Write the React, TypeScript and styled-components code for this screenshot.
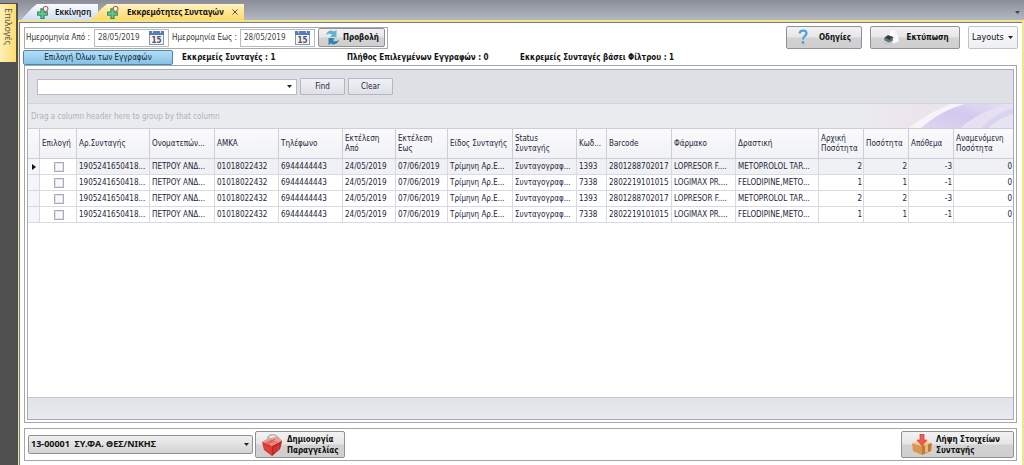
import React from "react";
import styled, { createGlobalStyle } from "styled-components";

const Global = createGlobalStyle`
  * { box-sizing: border-box; }
  body { margin: 0; background: #fff; }
  button, input, select { font: inherit; color: inherit; margin: 0; }
  svg { flex: none; }
`;
const tahoma = `"DejaVu Sans Condensed", "DejaVu Sans", sans-serif`;
const segoe = `"Noto Sans", "Open Sans", sans-serif`;

const Shell = styled.div`
  display: flex;
  min-height: 100vh;
  background: #505050;
  font: 8px/12px ${tahoma};
  color: #111;
`;
const Rail = styled.aside`
  flex: 0 0 18px;
  padding-top: 4px;
  background: linear-gradient(#8a8d96 0, #8a8d96 3px, #505050 3px);
`;
const RailTab = styled.button`
  display: flex;
  align-items: center;
  width: 16px;
  height: 58px;
  padding: 4px 0 0 0;
  border: 0;
  background: linear-gradient(90deg, #fff0b8, #ffdc6e);
  color: #555;
  font: 9px/12px ${segoe};
  writing-mode: vertical-rl;
`;
const Main = styled.main`
  flex: 1;
  min-width: 0;
  display: flex;
  flex-direction: column;
`;
const TabStrip = styled.nav`
  display: flex;
  align-items: flex-end;
  height: 20px;
  padding: 0 4px 0 3px;
  background: linear-gradient(#8a8d97, #b4b8c2);
  font-family: ${segoe};
`;
const Tab = styled.button<{ $active?: boolean; $w: number }>`
  display: flex;
  align-items: center;
  gap: ${(p) => (p.$active ? 8 : 6)}px;
  flex: 0 0 ${(p) => p.$w}px;
  height: 16px;
  padding: 0 6px 0 15px;
  border: 0;
  margin-right: -7px;
  clip-path: polygon(0 100%, 11px 4px, 16px 0, 100% 0, 100% 100%);
  background: ${(p) => (p.$active ? "linear-gradient(#fff3c4, #ffd966)" : "linear-gradient(#fafcff, #cfdcf2)")};
  font-weight: ${(p) => (p.$active ? 700 : 600)};
  white-space: nowrap;
  z-index: ${(p) => (p.$active ? 1 : 0)};
`;
const StripMenu = styled.button`
  display: flex;
  align-items: center;
  align-self: center;
  height: 12px;
  padding: 4px 0 0;
  border: 0;
  background: transparent;
`;
const Spacer = styled.span` flex: 1; `;
const Page = styled.div`
  flex: 1;
  display: flex;
  flex-direction: column;
  padding: 4px;
  border: solid #efe68c;
  border-width: 2px 2px 0 1px;
  box-shadow: inset 1px 1px #77788a;
  background: #fff;
`;
const Toolbar = styled.div`
  display: flex;
  align-items: center;
  gap: 8px;
`;
const DateBar = styled.div`
  display: flex;
  align-items: center;
  gap: 3px;
  height: 22px;
  padding: 0 2px 0 1px;
  margin-left: 1px;
  border: 1px solid #a9a9ae;
  color: #333;
  white-space: nowrap;
`;
const DateLabel = styled.label` width: 65px; `;
const DateField = styled.span`
  display: flex;
  align-items: center;
  height: 18px;
  width: 75px;
  padding: 0 4px 0 3px;
  border: 1px solid #b9bac2;
  background: #fff;
`;
const DateInput = styled.input`
  flex: 1;
  min-width: 0;
  padding: 0;
  border: 0;
  background: transparent;
  color: #444;
`;
const GrayButton = styled.button<{ $w: number; $h: number; $indent?: number }>`
  display: flex;
  align-items: center;
  justify-content: flex-start;
  gap: 4px;
  width: ${(p) => p.$w}px;
  height: ${(p) => p.$h}px;
  padding: 0 4px 0 ${(p) => p.$indent ?? 4}px;
  border: 1px solid #919191;
  border-radius: 2px;
  background: linear-gradient(#f2f2f2, #e6e6e6 48%, #d2d2d2 52%, #cfcfcf);
  color: #111;
  font-weight: 700;
  line-height: 11px;
  text-align: left;
  white-space: nowrap;
`;
const LayoutsButton = styled(GrayButton)`
  justify-content: space-between;
  border-color: #c2c3ca;
  background: linear-gradient(#fbfbfc, #eeeff2);
  font: 500 9px/11px ${tahoma};
`;
const Counts = styled.div`
  display: flex;
  align-items: center;
  height: 15px;
  margin-top: 1px;
  font-weight: 700;
  white-space: nowrap;
`;
const SelectAll = styled.button`
  width: 150px;
  height: 15px;
  padding: 0;
  border: 1px solid #4d87ab;
  border-radius: 2px;
  background: linear-gradient(#b5def5, #85c2e8);
  font-weight: 400;
  line-height: 12px;
  color: #123;
`;
const Count = styled.span<{ $w: number }>`
  width: ${(p) => p.$w}px;
  margin-left: 9px;
`;
const Frame = styled.section`
  display: flex;
  flex-direction: column;
  margin: 0 1px;
  padding: 3px 2px 2px;
  border: 1px solid #a5a6ad;
`;
const GridFrame = styled(Frame)` flex: 1; `;
const Grid = styled.div`
  flex: 1;
  display: flex;
  flex-direction: column;
  border: 1px solid #a9abb8;
  color: #24243c;
`;
const FindPanel = styled.form`
  display: flex;
  align-items: center;
  gap: 3px;
  height: 34px;
  padding-left: 9px;
  border-bottom: 1px solid #d3d4d9;
  background: #dfe0e5;
`;
const Combo = styled.span`
  display: flex;
  align-items: center;
  width: 260px;
  height: 16px;
  padding-right: 4px;
  border: 1px solid #b9bbc8;
  background: #fff;
`;
const ComboInput = styled.input`
  flex: 1;
  min-width: 0;
  border: 0;
  background: transparent;
`;
const FlatButton = styled.button`
  width: 45px;
  height: 17px;
  padding: 0;
  border: 1px solid #b4b6c6;
  border-radius: 1px;
  background: linear-gradient(#f0f1f4, #e0e1e7);
`;
const GroupPanel = styled.div`
  display: flex;
  justify-content: space-between;
  height: 24px;
  padding-left: 3px;
  background: #eaebef;
  color: #b0b1b9;
  line-height: 26px;
`;
const Table = styled.table`
  width: 100%;
  table-layout: fixed;
  border-collapse: separate;
  border-spacing: 0;
  th:last-child, td:last-child { border-right: 0; }
`;
const Th = styled.th`
  height: 31px;
  padding: 0 3px 0 2px;
  border: solid #cdced6;
  border-width: 1px 1px 1px 0;
  background: linear-gradient(#fafafc, #f1f2f5);
  font-weight: 400;
  line-height: 10px;
  text-align: left;
  overflow: hidden;
`;
const Td = styled.td<{ $right?: boolean; $focus?: boolean }>`
  height: 16px;
  padding: 0 1px 0 2px;
  border: solid #d9dae1;
  border-width: 0 1px 1px 0;
  background: ${(p) => (p.$focus ? "#f0f1f4" : "#fff")};
  line-height: 12px;
  text-align: ${(p) => (p.$right ? "right" : "left")};
  white-space: nowrap;
  overflow: hidden;
`;
const MarkTd = styled(Td)`
  background: #f4f5f8;
  svg { display: block; margin-left: 2px; }
`;
const Check = styled.input`
  appearance: none;
  display: block;
  width: 10px;
  height: 10px;
  margin: 0 auto;
  border: 1px solid #a9abb8;
  box-shadow: inset 0 0 0 1px #e2e3ea;
  background: #f8f8fa;
`;
const GridFooter = styled.div`
  height: 22px;
  margin-top: auto;
  border-top: 1px solid #c5c6ce;
  background: linear-gradient(#e2e3e8, #e8e9ed);
`;
const BottomBar = styled(Frame)`
  flex-direction: row;
  align-items: center;
  gap: 2px;
  height: 33px;
  margin-top: 5px;
  padding: 0 2px 0 3px;
`;
const Picker = styled.span`
  position: relative;
  display: flex;
  align-items: center;
  width: 225px;
  height: 19px;
`;
const Select = styled.select`
  appearance: none;
  width: 100%;
  height: 19px;
  padding: 0 16px 2px 2px;
  border: 1px solid #919191;
  border-radius: 2px;
  background: linear-gradient(#efefef, #d2d2d2);
  font: 700 9px/12px ${segoe};
`;
const PickerArrow = styled.span`
  position: absolute;
  right: 4px;
  display: flex;
  pointer-events: none;
`;

const Arrow = ({ color = "#222" }) => (
  <svg width="5" height="3" viewBox="0 0 5 3"><path d="M0 0h5L2.500 3z" fill={color} /></svg>
);
const Cross = () => (
  <svg width="13" height="13" viewBox="0 0 12 12">
    <path d="M4 2h4v3h3v4H8v3H4V9H1V5h3z" fill="#2f8f5a" />
    <path d="M5 3.500h2v2.500h3v2H7v3H5V8H2V6h3z" fill="#62c890" />
    <path d="M6.500 2.500c.5-3 5-2.500 4.500.5-.3 1.500-2 1.500-2.500 3.500" fill="none" stroke="#b5545a" />
    <circle cx="8.700" cy="2.600" r="1.500" fill="#f2f2f2" />
  </svg>
);
const Calendar = () => (
  <svg width="15" height="15" viewBox="0 0 15 15">
    <rect x=".5" y="1.500" width="14" height="13" fill="#f3f4f7" stroke="#8d96a8" />
    <path d="M0 1h15v4H0z" fill="#5580b4" />
    <path d="M3 0h1v3H3zM11 0h1v3h-1z" fill="#dce6f2" />
    <text x="7.500" y="13" textAnchor="middle" fontSize="8" fontWeight="700" fontFamily="DejaVu Sans Condensed" fill="#4b5162">15</text>
  </svg>
);
const Refresh = () => (
  <svg width="13" height="15" viewBox="0 0 13 15">
    <path d="M0 5C1 1 5-.5 8 1.500L10.500 0v7H4l2.200-2.200C4 3.500 2 3.500 0 5z" fill="#5fb3cf" />
    <path d="M13 10c-1 4-5 5.500-8 3.500L2.500 15V8H9l-2.200 2.200c2.200 1.300 4.200 1.300 6.200-.2z" fill="#2f87a9" />
  </svg>
);
const Help = () => (
  <svg width="12" height="17" viewBox="0 0 12 17">
    <ellipse cx="6" cy="15.500" rx="4" ry="1" fill="#c3cdd3" />
    <path d="M2.500 4.500C3 1 9 .5 9.500 4c.3 3-3.500 3-3.500 6.500" fill="none" stroke="#4aa3d8" strokeWidth="2.200" />
    <circle cx="6" cy="13.500" r="1.400" fill="#4aa3d8" />
  </svg>
);
const Printer = () => (
  <svg width="17" height="15" viewBox="0 0 17 15">
    <path d="M8 0l5 1.500L11 8 6 6z" fill="#fdfdfd" />
    <path d="M9 7l5-5 2 9-6 3z" fill="#f7f8f9" />
    <path d="M1 8l4-3L10.500 7 9.500 11l-4 1.500L1.500 10.500z" fill="#69747a" />
    <path d="M2 7.500L5 5.500 9.500 7 6.500 10z" fill="#2c3f3d" />
    <path d="M0 12l5 1.500 5-1-2.500 2H3z" fill="#bfc6ca" />
  </svg>
);
const Basket = () => (
  <svg width="22" height="22" viewBox="0 0 22 22">
    <path d="M1 8l6-3 10-2 4 4-2 8-8 7-8-6z" fill="#d93a35" />
    <path d="M1 8l7-4 9-1 4 4-10 5z" fill="#f09a90" />
    <path d="M11 12v10l8-7 2-8z" fill="#c22a2a" />
    <path d="M4 8.500l6 2M6 7l7 2.500M9 6l7 2.500M6 10l8-5" stroke="#d84a44" strokeWidth=".8" />
    <path d="M4 12l1 3M7 13l1 4M14 13v5M17 11v5" stroke="#e4605a" strokeWidth=".8" />
    <path d="M7 7c-2-7 8-9 11-1" fill="none" stroke="#b4b4b9" strokeWidth="1.600" />
  </svg>
);
const Parcel = () => (
  <svg width="20" height="21" viewBox="0 0 20 21">
    <path d="M0 9l10 3v9l-9-4z" fill="#d9964e" />
    <path d="M0 9l10-4 10 4-10 3z" fill="#f3cf98" />
    <path d="M10 12l10-3-1 8-9 4z" fill="#c07a36" />
    <path d="M13 11l3-1v8l-3 1z" fill="#e8b878" />
    <path d="M8 0h4v6h3l-5 6-5-6h3z" fill="#ee5b55" stroke="#c83232" strokeWidth=".6" />
  </svg>
);
const Swoosh = () => (
  <svg width="150" height="24" viewBox="0 0 150 24">
    <defs>
      <linearGradient id="glow" x1="0" x2="1">
        <stop offset="0" stopColor="#eaebef" />
        <stop offset=".3" stopColor="#ece5ed" />
        <stop offset="1" stopColor="#e6e3f2" />
      </linearGradient>
      <linearGradient id="lilac" x1="0" x2="1" y1="1" y2="0">
        <stop offset="0" stopColor="#dcd6ef" />
        <stop offset=".5" stopColor="#d2c9ee" />
        <stop offset="1" stopColor="#e2def3" />
      </linearGradient>
    </defs>
    <path d="M0 0h150v24H0z" fill="url(#glow)" />
    <path d="M46 24C60 13 74 5 88 0h14C84 5 72 12 58 24z" fill="#f6f4f9" />
    <path d="M58 24C72 12 84 5 102 0h42c-18 5-34 13-46 24z" fill="url(#lilac)" />
    <path d="M98 24c12-11 28-19 46-24h6v4c-14 4-24 11-34 20z" fill="#e5e1f3" />
    <path d="M118 24c8-9 18-16 32-20v6c-12 4-18 8-24 14z" fill="#dad4ee" />
  </svg>
);

type Col = { w: number; t: string; right?: boolean };
const cols: Col[] = [
  { w: 73, t: "Αρ.Συνταγής" }, { w: 65, t: "Ονοματεπών..." }, { w: 64, t: "ΑΜΚΑ" },
  { w: 64, t: "Τηλέφωνο" }, { w: 53, t: "Εκτέλεση Από" }, { w: 52, t: "Εκτέλεση Εως" },
  { w: 65, t: "Είδος Συνταγής" }, { w: 64, t: "Status Συνταγής" }, { w: 30, t: "Κωδ..." },
  { w: 65, t: "Barcode" }, { w: 64, t: "Φάρμακο" }, { w: 83, t: "Δραστική" },
  { w: 45, t: "Αρχική Ποσότητα", right: true }, { w: 45, t: "Ποσότητα", right: true },
  { w: 45, t: "Απόθεμα", right: true }, { w: 59, t: "Αναμενόμενη Ποσότητα", right: true },
];
const start = ["1905241650418...", "ΠΕΤΡΟΥ ΑΝΔ...", "01018022432", "6944444443", "24/05/2019", "07/06/2019", "Τρίμηνη Αρ.Ε...", "Συνταγογραφ..."];
const lopresor = [...start, "1393", "2801288702017", "LOPRESOR F....", "METOPROLOL TAR...", "2", "2", "-3", "0"];
const logimax = [...start, "7338", "2802219101015", "LOGIMAX PR....", "FELODIPINE,METO...", "1", "1", "-1", "0"];
const rows = [lopresor, logimax, lopresor, logimax];

export default function App() {
  return (
    <Shell>
      <Global />
      <Rail><RailTab>Επιλογές</RailTab></Rail>
      <Main>
        <TabStrip>
          <Tab $w={77}><Cross />Εκκίνηση</Tab>
          <Tab $w={153} $active><Cross />Εκκρεμότητες Συνταγών
            <svg width="6" height="6" viewBox="0 0 6 6"><path d="M.5.500l5 5M5.500.5l-5 5" stroke="#555" /></svg>
          </Tab>
          <Spacer />
          <StripMenu aria-label="Καρτέλες"><Arrow color="#444" /></StripMenu>
        </TabStrip>
        <Page>
          <Toolbar>
            <DateBar>
              <DateLabel htmlFor="from">Ημερομηνία Από :</DateLabel>
              <DateField><DateInput id="from" defaultValue="28/05/2019" /><Calendar /></DateField>
              <DateLabel htmlFor="to">Ημερομηνία Εως :</DateLabel>
              <DateField><DateInput id="to" defaultValue="28/05/2019" /><Calendar /></DateField>
              <GrayButton $w={67} $h={19} $indent={7}><Refresh />Προβολή</GrayButton>
            </DateBar>
            <Spacer />
            <GrayButton $w={76} $h={23} $indent={10}><Help /><Spacer />Οδηγίες<Spacer /></GrayButton>
            <GrayButton $w={90} $h={23} $indent={12}><Printer />&nbsp;Εκτύπωση</GrayButton>
            <LayoutsButton $w={50} $h={23} $indent={3}>Layouts <Arrow /></LayoutsButton>
          </Toolbar>
          <Counts>
            <SelectAll>Επιλογή Όλων των Εγγραφών</SelectAll>
            <Count $w={156}>Εκκρεμείς Συνταγές : 1</Count>
            <Count $w={164}>Πλήθος Επιλεγμένων Εγγραφών : 0</Count>
            <Count $w={180}>Εκκρεμείς Συνταγές βάσει Φίλτρου : 1</Count>
          </Counts>
          <GridFrame>
            <Grid>
              <FindPanel onSubmit={(e) => e.preventDefault()}>
                <Combo><ComboInput aria-label="Find" /><Arrow /></Combo>
                <FlatButton>Find</FlatButton>
                <FlatButton type="button">Clear</FlatButton>
              </FindPanel>
              <GroupPanel>Drag a column header here to group by that column<Swoosh /></GroupPanel>
              <Table>
                <colgroup>
                  <col style={{ width: 12 }} /><col style={{ width: 37 }} />
                  {cols.map((c) => <col key={c.t} style={{ width: c.w }} />)}
                </colgroup>
                <thead>
                  <tr><Th /><Th>Επιλογή</Th>{cols.map((c) => <Th key={c.t}>{c.t}</Th>)}</tr>
                </thead>
                <tbody>
                  {rows.map((r, i) => (
                    <tr key={i}>
                      <MarkTd>{i === 0 && <svg width="4" height="6" viewBox="0 0 4 6"><path d="M0 0l4 3-4 3z" fill="#111" /></svg>}</MarkTd>
                      <Td><Check type="checkbox" aria-label="Επιλογή" /></Td>
                      {r.map((v, j) => <Td key={j} $right={cols[j].right} $focus={i === 0}>{v}</Td>)}
                    </tr>
                  ))}
                </tbody>
              </Table>
              <GridFooter />
            </Grid>
          </GridFrame>
          <BottomBar>
            <Picker>
              <Select aria-label="Αποθήκη"><option>13-00001&nbsp; ΣΥ.ΦΑ. ΘΕΣ/ΝΙΚΗΣ</option></Select>
              <PickerArrow><Arrow /></PickerArrow>
            </Picker>
            <GrayButton $w={90} $h={27} $indent={5}><Basket /><span>Δημιουργία<br />Παραγγελίας</span></GrayButton>
            <Spacer />
            <GrayButton $w={113} $h={27} $indent={10}><Parcel /><span>Λήψη Στοιχείων<br />Συνταγής</span></GrayButton>
          </BottomBar>
        </Page>
      </Main>
    </Shell>
  );
}
